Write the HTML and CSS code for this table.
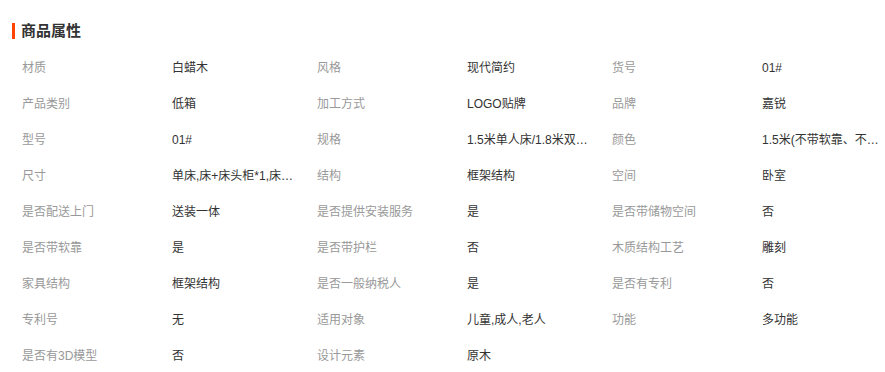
FILE: index.html
```html
<!DOCTYPE html>
<html lang="zh-CN">
<head>
<meta charset="utf-8">
<title>商品属性</title>
<link rel="stylesheet" href="styles.css">
</head>
<body>
<div class="attrs">
  <h3 class="attrs-title">商品属性</h3>
  <ul class="attrs-list">
    <li class="item"><span class="label">材质</span><span class="value">白蜡木</span></li>
    <li class="item"><span class="label">风格</span><span class="value">现代简约</span></li>
    <li class="item"><span class="label">货号</span><span class="value">01#</span></li>
    <li class="item"><span class="label">产品类别</span><span class="value">低箱</span></li>
    <li class="item"><span class="label">加工方式</span><span class="value">LOGO贴牌</span></li>
    <li class="item"><span class="label">品牌</span><span class="value">嘉锐</span></li>
    <li class="item"><span class="label">型号</span><span class="value">01#</span></li>
    <li class="item"><span class="label">规格</span><span class="value">1.5米单人床/1.8米双人床/2.0米</span></li>
    <li class="item"><span class="label">颜色</span><span class="value">1.5米(不带软靠、不带床头柜)</span></li>
    <li class="item"><span class="label">尺寸</span><span class="value">单床,床+床头柜*1,床+床头柜*2</span></li>
    <li class="item"><span class="label">结构</span><span class="value">框架结构</span></li>
    <li class="item"><span class="label">空间</span><span class="value">卧室</span></li>
    <li class="item"><span class="label">是否配送上门</span><span class="value">送装一体</span></li>
    <li class="item"><span class="label">是否提供安装服务</span><span class="value">是</span></li>
    <li class="item"><span class="label">是否带储物空间</span><span class="value">否</span></li>
    <li class="item"><span class="label">是否带软靠</span><span class="value">是</span></li>
    <li class="item"><span class="label">是否带护栏</span><span class="value">否</span></li>
    <li class="item"><span class="label">木质结构工艺</span><span class="value">雕刻</span></li>
    <li class="item"><span class="label">家具结构</span><span class="value">框架结构</span></li>
    <li class="item"><span class="label">是否一般纳税人</span><span class="value">是</span></li>
    <li class="item"><span class="label">是否有专利</span><span class="value">否</span></li>
    <li class="item"><span class="label">专利号</span><span class="value">无</span></li>
    <li class="item"><span class="label">适用对象</span><span class="value">儿童,成人,老人</span></li>
    <li class="item"><span class="label">功能</span><span class="value">多功能</span></li>
    <li class="item"><span class="label">是否有3D模型</span><span class="value">否</span></li>
    <li class="item"><span class="label">设计元素</span><span class="value">原木</span></li>
  </ul>
</div>
</body>
</html>
```
FILE: styles.css
```css
* { box-sizing: border-box; }
html, body {
  margin: 0;
  padding: 0;
  background: #fff;
  font-family: "Liberation Sans", "Noto Sans CJK SC", sans-serif;
  font-size: 12px;
  color: #333;
  overflow: hidden;
}
.attrs {
  padding: 23px 0 0 12px;
}
.attrs-title {
  margin: 0;
  height: 16px;
  line-height: 16px;
  font-size: 15px;
  font-weight: bold;
  color: #333;
  padding-left: 6px;
  border-left: 3px solid #ff4400;
}
.attrs-list {
  list-style: none;
  margin: 11px 0 0 0;
  padding: 0 0 0 10px;
  display: grid;
  grid-template-columns: repeat(3, 295px);
  width: 900px;
}
.item {
  display: flex;
  height: 36px;
  line-height: 36px;
}
.label {
  width: 150px;
  flex: none;
  color: #999;
}
.value {
  max-width: 124px;
  color: #333;
  white-space: nowrap;
  overflow: hidden;
  text-overflow: ellipsis;
}
```
